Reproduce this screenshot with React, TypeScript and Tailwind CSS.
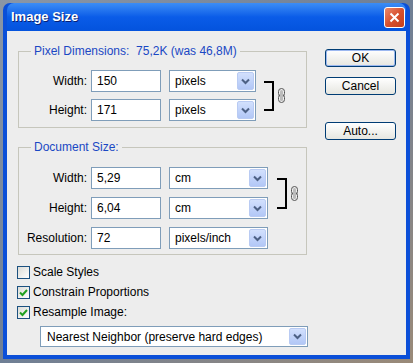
import React from "react";

const Chevron = () => (
  <svg width="9" height="7" viewBox="0 0 9 7">
    <path d="M1 1.5 L4.5 5 L8 1.5" fill="none" stroke="#4d6185" strokeWidth="2" />
  </svg>
);

const Select = ({ value, width }: { value: string; width: string }) => (
  <div className={`flex h-[22px] ${width} items-center border border-[#7f9db9] bg-white`}>
    <span className="flex-1 pl-[5px]">{value}</span>
    <div className="mr-[1px] flex h-[18px] w-[17px] items-center justify-center rounded-[2px] border border-[#b9cbf3] bg-gradient-to-b from-[#d2e0fd] to-[#b2c7f6]">
      <Chevron />
    </div>
  </div>
);

const Field = ({ label, value }: { label: string; value: string }) => (
  <>
    <span className="w-[68px] text-right">{label}</span>
    <div className="ml-[4px] flex h-[22px] w-[70px] items-center border border-[#7f9db9] bg-white pl-[5px]">
      {value}
    </div>
  </>
);

const Chain = () => (
  <svg width="7" height="15" viewBox="0 0 7 15">
    <rect x="0.5" y="0.5" width="6" height="8" rx="3" fill="none" stroke="#555" strokeWidth="1" />
    <rect x="0.5" y="6.5" width="6" height="8" rx="3" fill="none" stroke="#555" strokeWidth="1" />
    <rect x="2" y="2" width="3" height="11" rx="1.5" fill="#bbb" />
  </svg>
);

const Checkbox = ({ label, checked }: { label: string; checked?: boolean }) => (
  <div className="flex h-[20px] items-center">
    <div className="flex h-[13px] w-[13px] items-center justify-center border border-[#1c5180] bg-gradient-to-br from-[#dcdcd7] to-white">
      {checked && (
        <svg width="9" height="9" viewBox="0 0 9 9">
          <path d="M1 4.5 L3.5 7 L8 2" fill="none" stroke="#21a121" strokeWidth="2" />
        </svg>
      )}
    </div>
    <span className="ml-[3px]">{label}</span>
  </div>
);

const Button = ({ label, focused }: { label: string; focused?: boolean }) => (
  <button
    className={`flex h-[18px] w-[71px] items-center justify-center rounded-[3px] border border-[#003c74] bg-gradient-to-b from-white to-[#e6e6e0] text-black ${
      focused ? "shadow-[inset_0_0_0_1px_#9cb8f0]" : ""
    }`}
  >
    {label}
  </button>
);

export default function App() {
  return (
    <div className="h-[363px] w-[413px] bg-gradient-to-br from-[#8a96a6] via-[#6f7f95] to-[#9a8a78] pl-[3px] pt-[3px] font-['Liberation_Sans',sans-serif] text-[12px] leading-[14px] text-black">
      <div className="flex h-[356px] w-[407px] flex-col rounded-t-[7px] bg-[#0b4fd8] px-[4px] pb-[4px]">
        <div className="flex h-[28px] items-center justify-between rounded-t-[7px] bg-gradient-to-b from-[#3c8df5] via-[#0a5ce8] to-[#0453dd] pl-[4px] pr-[1px]">
          <span className="text-[13px] font-bold text-white [text-shadow:1px_1px_#0a1f70]">Image Size</span>
          <div className="flex h-[21px] w-[21px] items-center justify-center rounded-[3px] border border-white bg-gradient-to-br from-[#e9886c] via-[#d8502e] to-[#c43f1c]">
            <svg width="11" height="11" viewBox="0 0 11 11">
              <path d="M1.5 1.5 L9.5 9.5 M9.5 1.5 L1.5 9.5" stroke="white" strokeWidth="2" />
            </svg>
          </div>
        </div>

        <div className="flex flex-1 bg-[#ededed] pl-[11px] pt-[13px]">
          <div className="flex w-[289px] flex-col">
            <fieldset className="border border-[#c6c6bc] pb-[6px]">
              <legend className="ml-[12px] px-[3px] text-[#1a48c4]">
                Pixel Dimensions:&nbsp; 75,2K (was 46,8M)
              </legend>
              <div className="mt-[12px] flex">
                <div className="flex flex-col gap-[7px]">
                  <div className="flex items-center">
                    <Field label="Width:" value="150" />
                    <div className="ml-[8px]">
                      <Select value="pixels" width="w-[87px]" />
                    </div>
                  </div>
                  <div className="flex items-center">
                    <Field label="Height:" value="171" />
                    <div className="ml-[8px]">
                      <Select value="pixels" width="w-[87px]" />
                    </div>
                  </div>
                </div>
                <div className="ml-[8px] mt-[11px] h-[30px] w-[10px] border-y-2 border-r-2 border-black" />
                <div className="ml-[4px] mt-[18px]">
                  <Chain />
                </div>
              </div>
            </fieldset>

            <fieldset className="mt-[12px] border border-[#c6c6bc] pb-[5px]">
              <legend className="ml-[12px] px-[3px] text-[#1a48c4]">Document Size:</legend>
              <div className="mt-[13px] flex">
                <div className="flex flex-col gap-[8px]">
                  <div className="flex items-center">
                    <Field label="Width:" value="5,29" />
                    <div className="ml-[8px]">
                      <Select value="cm" width="w-[99px]" />
                    </div>
                  </div>
                  <div className="flex items-center">
                    <Field label="Height:" value="6,04" />
                    <div className="ml-[8px]">
                      <Select value="cm" width="w-[99px]" />
                    </div>
                  </div>
                </div>
                <div className="ml-[9px] mt-[11px] h-[31px] w-[10px] border-y-2 border-r-2 border-black" />
                <div className="ml-[4px] mt-[19px]">
                  <Chain />
                </div>
              </div>
              <div className="mt-[8px] flex items-center">
                <Field label="Resolution:" value="72" />
                <div className="ml-[8px]">
                  <Select value="pixels/inch" width="w-[99px]" />
                </div>
              </div>
            </fieldset>

            <div className="ml-[-1px] mt-[7px] flex flex-col">
              <Checkbox label="Scale Styles" />
              <Checkbox label="Constrain Proportions" checked />
              <Checkbox label="Resample Image:" checked />
            </div>
            <div className="ml-[22px] mt-[4px]">
              <div className="flex h-[21px] w-[268px] items-center border border-[#7f9db9] bg-white">
                <span className="flex-1 pl-[6px]">Nearest Neighbor (preserve hard edges)</span>
                <div className="mr-[1px] flex h-[17px] w-[17px] items-center justify-center rounded-[2px] border border-[#b9cbf3] bg-gradient-to-b from-[#d2e0fd] to-[#b2c7f6]">
                  <Chevron />
                </div>
              </div>
            </div>
          </div>

          <div className="ml-[18px] mt-[5px] flex flex-col">
            <Button label="OK" focused />
            <div className="mt-[10px]">
              <Button label="Cancel" />
            </div>
            <div className="mt-[27px]">
              <Button label="Auto..." />
            </div>
          </div>
        </div>
      </div>
    </div>
  );
}
